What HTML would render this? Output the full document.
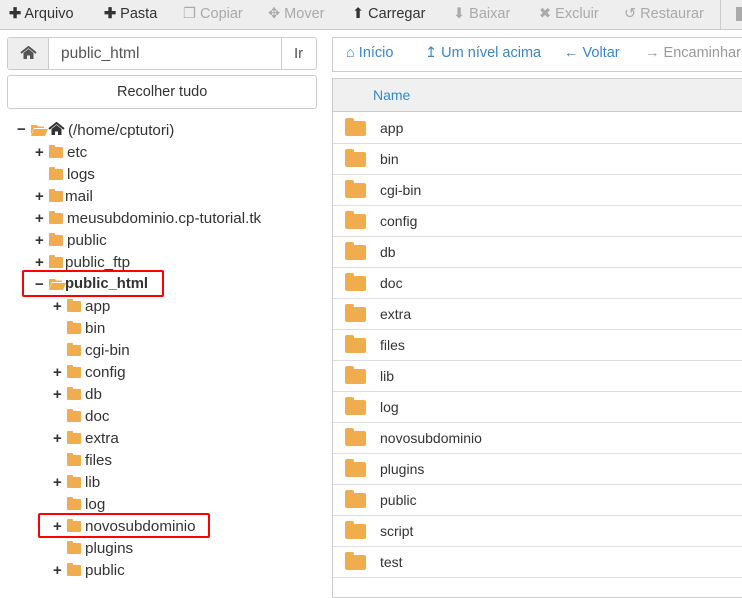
<!DOCTYPE html>
<html><head><meta charset="utf-8"><style>
*{box-sizing:border-box;margin:0;padding:0}
body{width:742px;height:584px;overflow:hidden;background:#fff;font-family:"Liberation Sans",sans-serif;font-size:14px;color:#333;position:relative}
.tb{position:absolute;left:0;top:0;width:742px;height:30px;background:#eee;border-bottom:1px solid #ccc}
.tb span{position:absolute;top:6px;font-size:14.5px;white-space:nowrap}
.dis{color:#aaa}
.box{position:absolute;border:1px solid #ccc;border-radius:3px}
.t{position:absolute;white-space:nowrap;font-size:14px}
.tr{font-size:15.2px;margin-top:2px}
.fo{position:absolute;width:14px;height:11px;background:#f0ad4e;border-radius:1px}
.fo:before{content:"";position:absolute;left:0;top:-2px;width:6px;height:3px;background:#f0ad4e;border-radius:1px 1px 0 0}
.pl{position:absolute;font-weight:bold;font-size:15px;margin-top:3px}
.rf{position:absolute;left:345px;width:21px;height:15px;background:#f0ad4e;border-radius:2px}
.rf:before{content:"";position:absolute;left:0;top:-3px;width:9px;height:4px;background:#f0ad4e;border-radius:2px 2px 0 0}
.row{position:absolute;left:333px;width:409px;height:31px;border-bottom:1px solid #ddd}
.red{position:absolute;border:2.5px solid #f00;border-radius:2px}
</style></head><body>
<div class="tb">
<span style="left:9px"><b>✚</b> Arquivo</span>
<span style="left:104px"><b>✚</b> Pasta</span>
<span class="dis" style="left:183px">❐ Copiar</span>
<span class="dis" style="left:268px">✥ Mover</span>
<span style="left:352px">⬆ Carregar</span>
<span class="dis" style="left:453px">⬇ Baixar</span>
<span class="dis" style="left:539px">✖ Excluir</span>
<span class="dis" style="left:624px">↺ Restaurar</span>
<div style="position:absolute;left:720px;top:0;width:1px;height:30px;background:#ccc"></div>
<div style="position:absolute;left:736px;top:7px;width:6px;height:14px;background:#aaa"></div>
</div>
<div class="box" style="left:7px;top:37px;width:310px;height:33px;background:#fff"></div>
<div style="position:absolute;left:8px;top:38px;width:41px;height:31px;background:#eee;border-right:1px solid #ccc;border-radius:3px 0 0 3px"></div>
<svg style="position:absolute;left:20px;top:46px" width="17" height="14" viewBox="0 0 17 14"><path d="M1 7L8.5 1L16 7" stroke="#555" stroke-width="2" fill="none"/><path d="M3.5 7V13H7V9.5H10V13H13.5V7L8.5 3Z" fill="#555"/></svg>
<div class="t" style="left:61px;top:45px;font-size:15.5px;color:#555">public_html</div>
<div style="position:absolute;left:281px;top:38px;width:1px;height:31px;background:#ccc"></div>
<div class="t" style="left:294px;top:45px;font-size:15px;color:#555">Ir</div>
<div class="box" style="left:7px;top:75px;width:310px;height:34px"></div>
<div class="t" style="left:117px;top:84px;font-size:14.5px">Recolher tudo</div>

<div class="pl" style="left:17px;top:118px">−</div>
<svg style="position:absolute;left:31px;top:124px" width="17" height="12" viewBox="0 0 17 12"><path d="M0 1H6L7 2.5H13V4H3L0 11Z" fill="#f0ad4e"/><path d="M3 5H17L14 12H0Z" fill="#f0ad4e"/></svg>
<svg style="position:absolute;left:48px;top:122px" width="17" height="14" viewBox="0 0 17 14"><path d="M1 7L8.5 1L16 7" stroke="#333" stroke-width="2" fill="none"/><path d="M3.5 7V13H7V9.5H10V13H13.5V7L8.5 3Z" fill="#333"/></svg>
<div class="t tr" style="left:68px;top:120px">(/home/cptutori)</div>

<div class="pl" style="left:35px;top:141px">+</div><div class="fo" style="left:49px;top:147px"></div><div class="t tr" style="left:67px;top:142px">etc</div>
<div class="fo" style="left:49px;top:169px"></div><div class="t tr" style="left:67px;top:164px">logs</div>
<div class="pl" style="left:35px;top:185px">+</div><div class="fo" style="left:49px;top:191px"></div><div class="t tr" style="left:65px;top:186px">mail</div>
<div class="pl" style="left:35px;top:207px">+</div><div class="fo" style="left:49px;top:213px"></div><div class="t tr" style="left:67px;top:208px">meusubdominio.cp-tutorial.tk</div>
<div class="pl" style="left:35px;top:229px">+</div><div class="fo" style="left:49px;top:235px"></div><div class="t tr" style="left:67px;top:230px">public</div>
<div class="pl" style="left:35px;top:251px">+</div><div class="fo" style="left:49px;top:257px"></div><div class="t tr" style="left:65px;top:252px">public_ftp</div>
<div class="pl" style="left:35px;top:273px">−</div>
<svg style="position:absolute;left:49px;top:278px" width="17" height="12" viewBox="0 0 17 12"><path d="M0 1H6L7 2.5H13V4H3L0 11Z" fill="#f0ad4e"/><path d="M3 5H17L14 12H0Z" fill="#f0ad4e"/></svg>
<div class="t" style="left:65px;top:276px;font-weight:bold;font-size:14.8px">public_html</div>
<div class="red" style="left:22px;top:270px;width:142px;height:27px"></div>

<div class="pl" style="left:53px;top:295px">+</div><div class="fo" style="left:67px;top:301px"></div><div class="t tr" style="left:85px;top:296px">app</div>
<div class="fo" style="left:67px;top:323px"></div><div class="t tr" style="left:85px;top:318px">bin</div>
<div class="fo" style="left:67px;top:345px"></div><div class="t tr" style="left:85px;top:340px">cgi-bin</div>
<div class="pl" style="left:53px;top:361px">+</div><div class="fo" style="left:67px;top:367px"></div><div class="t tr" style="left:85px;top:362px">config</div>
<div class="pl" style="left:53px;top:383px">+</div><div class="fo" style="left:67px;top:389px"></div><div class="t tr" style="left:85px;top:384px">db</div>
<div class="fo" style="left:67px;top:411px"></div><div class="t tr" style="left:85px;top:406px">doc</div>
<div class="pl" style="left:53px;top:427px">+</div><div class="fo" style="left:67px;top:433px"></div><div class="t tr" style="left:85px;top:428px">extra</div>
<div class="fo" style="left:67px;top:455px"></div><div class="t tr" style="left:85px;top:450px">files</div>
<div class="pl" style="left:53px;top:471px">+</div><div class="fo" style="left:67px;top:477px"></div><div class="t tr" style="left:85px;top:472px">lib</div>
<div class="fo" style="left:67px;top:499px"></div><div class="t tr" style="left:85px;top:494px">log</div>
<div class="pl" style="left:53px;top:515px">+</div><div class="fo" style="left:67px;top:521px"></div><div class="t tr" style="left:85px;top:516px">novosubdominio</div>
<div class="red" style="left:38px;top:513px;width:172px;height:25px"></div>
<div class="fo" style="left:67px;top:543px"></div><div class="t tr" style="left:85px;top:538px">plugins</div>
<div class="pl" style="left:53px;top:559px">+</div><div class="fo" style="left:67px;top:565px"></div><div class="t tr" style="left:85px;top:560px">public</div>

<div style="position:absolute;left:332px;top:37px;width:420px;height:35px;border:1px solid #ccc;border-right:none"></div>
<div class="t" style="left:346px;top:45px;color:#3a87c8;font-size:14.5px">⌂ Início</div>
<div class="t" style="left:425px;top:45px;color:#3a87c8;font-size:14.5px">↥ Um nível acima</div>
<div class="t" style="left:564px;top:45px;color:#3a87c8;font-size:14.5px">← Voltar</div>
<div class="t" style="left:645px;top:45px;color:#999;font-size:14.5px">→ Encaminhar</div>

<div style="position:absolute;left:332px;top:78px;width:420px;height:520px;border:1px solid #ccc;border-right:none"></div>
<div style="position:absolute;left:333px;top:79px;width:409px;height:33px;background:#f0f0f0;border-bottom:1px solid #ccc"></div>
<div class="t" style="left:373px;top:87px;color:#3a87c8">Name</div>

<div class="row" style="top:113px"></div><div class="rf" style="top:121px"></div><div class="t" style="left:380px;top:120px">app</div>
<div class="row" style="top:144px"></div><div class="rf" style="top:152px"></div><div class="t" style="left:380px;top:151px">bin</div>
<div class="row" style="top:175px"></div><div class="rf" style="top:183px"></div><div class="t" style="left:380px;top:182px">cgi-bin</div>
<div class="row" style="top:206px"></div><div class="rf" style="top:214px"></div><div class="t" style="left:380px;top:213px">config</div>
<div class="row" style="top:237px"></div><div class="rf" style="top:245px"></div><div class="t" style="left:380px;top:244px">db</div>
<div class="row" style="top:268px"></div><div class="rf" style="top:276px"></div><div class="t" style="left:380px;top:275px">doc</div>
<div class="row" style="top:299px"></div><div class="rf" style="top:307px"></div><div class="t" style="left:380px;top:306px">extra</div>
<div class="row" style="top:330px"></div><div class="rf" style="top:338px"></div><div class="t" style="left:380px;top:337px">files</div>
<div class="row" style="top:361px"></div><div class="rf" style="top:369px"></div><div class="t" style="left:380px;top:368px">lib</div>
<div class="row" style="top:392px"></div><div class="rf" style="top:400px"></div><div class="t" style="left:380px;top:399px">log</div>
<div class="row" style="top:423px"></div><div class="rf" style="top:431px"></div><div class="t" style="left:380px;top:430px">novosubdominio</div>
<div class="row" style="top:454px"></div><div class="rf" style="top:462px"></div><div class="t" style="left:380px;top:461px">plugins</div>
<div class="row" style="top:485px"></div><div class="rf" style="top:493px"></div><div class="t" style="left:380px;top:492px">public</div>
<div class="row" style="top:516px"></div><div class="rf" style="top:524px"></div><div class="t" style="left:380px;top:523px">script</div>
<div class="row" style="top:547px"></div><div class="rf" style="top:555px"></div><div class="t" style="left:380px;top:554px">test</div>
</body></html>
